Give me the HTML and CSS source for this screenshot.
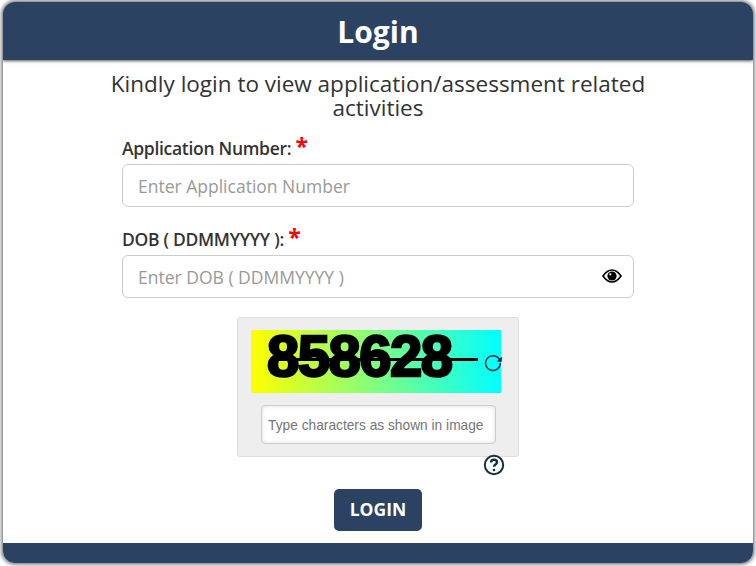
FILE: index.html
```html
<!DOCTYPE html>
<html lang="en">
<head>
    <meta charset="UTF-8">
    <meta name="viewport" content="width=device-width, initial-scale=1.0">
    <title>Login</title>
    <link rel="stylesheet" href="styles.css">
</head>
<body>
    <div class="card">
        <div class="card-header">Login</div>
        <div class="card-body">
            <p class="intro">Kindly login to view application/assessment related activities</p>
            <form class="login-form">
                <div class="field">
                    <label class="field-label">Application Number: <span class="req">*</span></label>
                    <div class="input-wrap">
                        <input class="text-input" type="text" placeholder="Enter Application Number">
                    </div>
                </div>
                <div class="field">
                    <label class="field-label">DOB ( DDMMYYYY ): <span class="req">*</span></label>
                    <div class="input-wrap">
                        <input class="text-input" type="text" placeholder="Enter DOB ( DDMMYYYY )">
                        <svg class="eye" viewBox="0 0 20 14" width="20" height="14">
                            <path d="M1 7C4 2.600 7 1 10 1s6 1.600 9 6c-3 4.400-6 6-9 6s-6-1.600-9-6z" fill="#fff" stroke="#000" stroke-width="1.600"/>
                            <circle cx="10" cy="7" r="4.600" fill="#000"/>
                            <circle cx="8.300" cy="5.300" r="1.100" fill="#fff"/>
                        </svg>
                    </div>
                </div>
                <div class="captcha-row">
                    <div class="captcha-box">
                        <div class="captcha-image">
                            <span class="captcha-code">858628</span>
                            <span class="captcha-line"></span>
                            <svg class="refresh" viewBox="0 0 18 18" width="18" height="18">
                                <path d="M15.500 5.500A7.400 7.400 0 1 0 16.400 9" fill="none" stroke="#12303f" stroke-width="1.500"/>
                                <path d="M17.800 2.600v5.200h-5.200z" fill="#12303f"/>
                            </svg>
                        </div>
                        <input class="captcha-input" type="text" placeholder="Type characters as shown in image">
                        <svg class="help" viewBox="0 0 22 22" width="22" height="22">
                            <circle cx="11" cy="11" r="9.200" fill="#fff" stroke="#12303f" stroke-width="2"/>
                            <path d="M8 8.600c0-1.800 1.300-2.800 3-2.800s3 1 3 2.500c0 2.200-3 2.200-3 4.400" fill="none" stroke="#12303f" stroke-width="2.400"/>
                            <circle cx="11" cy="16" r="1.300" fill="#12303f"/>
                        </svg>
                    </div>
                </div>
                <div class="actions">
                    <button class="login-btn" type="button">LOGIN</button>
                </div>
            </form>
        </div>
        <div class="card-footer"></div>
    </div>
</body>
</html>
```

FILE: styles.css
```css
* {
    box-sizing: border-box;
}
body {
    margin: 0;
    padding: 2px 3px 3px;
    background-color: #fff;
    font-family: "Open Sans", Arial, sans-serif;
    color: #333;
}
.card {
    height: 561px;
    display: flex;
    flex-direction: column;
    border-radius: 12px;
    background-color: #fff;
    box-shadow: 0 0 4px 1px #555;
    overflow: hidden;
}
.card-header {
    height: 58px;
    line-height: 60px;
    background-color: #2b4263;
    box-shadow: 0 1px 3px #555;
    color: #fff;
    font-size: 30px;
    font-weight: 700;
    text-align: center;
}
.card-body {
    flex: 1;
    padding: 12px 119px 0;
}
.card-footer {
    height: 20px;
    background-color: #2b4263;
}
.intro {
    margin: 0 -20px 12px;
    font-size: 22.500px;
    line-height: 24px;
    text-align: center;
}
.field {
    margin-bottom: 16px;
}
.field-label {
    display: block;
    height: 32px;
    font-size: 17.500px;
    font-weight: 600;
    letter-spacing: -0.300px;
    line-height: 32px;
}
.req {
    color: #f00;
    font-size: 23px;
    font-weight: 700;
    line-height: 20px;
}
.input-wrap {
    position: relative;
}
.text-input {
    display: block;
    width: 100%;
    height: 43px;
    padding: 0 15px;
    border: 1px solid #ccc;
    border-radius: 6px;
    font-family: "Open Sans", Arial, sans-serif;
    font-size: 17.500px;
}
.text-input::placeholder {
    color: #999;
    opacity: 1;
}
.eye {
    position: absolute;
    top: 14px;
    right: 12px;
}
.captcha-row {
    display: flex;
    justify-content: center;
    margin-top: 19px;
}
.captcha-box {
    position: relative;
    width: 282px;
    height: 140px;
    padding: 12px 13px;
    background-color: #eee;
    border: 1px solid #ddd;
    border-radius: 3px;
}
.captcha-image {
    position: relative;
    width: 250px;
    height: 63px;
    background: linear-gradient(to right, #ff0, #0ff);
}
.captcha-code {
    display: block;
    padding-left: 16px;
    color: #000;
    font-family: "Liberation Sans", Arial, sans-serif;
    font-size: 58px;
    font-weight: 700;
    letter-spacing: -1.500px;
    line-height: 52px;
    -webkit-text-stroke: 2.500px #000;
}
.captcha-line {
    position: absolute;
    left: 22px;
    top: 28px;
    width: 205px;
    height: 3px;
    background-color: #000;
}
.refresh {
    position: absolute;
    right: -1px;
    top: 24px;
}
.captcha-input {
    display: block;
    width: 235px;
    height: 39px;
    margin: 12px 0 0 10px;
    padding: 1px 6px 0;
    border: 1px solid #ccc;
    border-radius: 4px;
    box-shadow: inset 0 0 4px #ddd;
    font-family: "Liberation Sans", Arial, sans-serif;
    font-size: 13.750px;
}
.captcha-input::placeholder {
    color: #757575;
    opacity: 1;
}
.help {
    position: absolute;
    left: 245px;
    top: 136px;
}
.actions {
    display: flex;
    justify-content: center;
    margin-top: 32px;
}
.login-btn {
    width: 88px;
    height: 42px;
    padding: 0 0 2px;
    border: 0;
    border-radius: 5px;
    background-color: #2b4263;
    color: #fff;
    font-family: "Open Sans", Arial, sans-serif;
    font-size: 17.500px;
    font-weight: 700;
}
```
